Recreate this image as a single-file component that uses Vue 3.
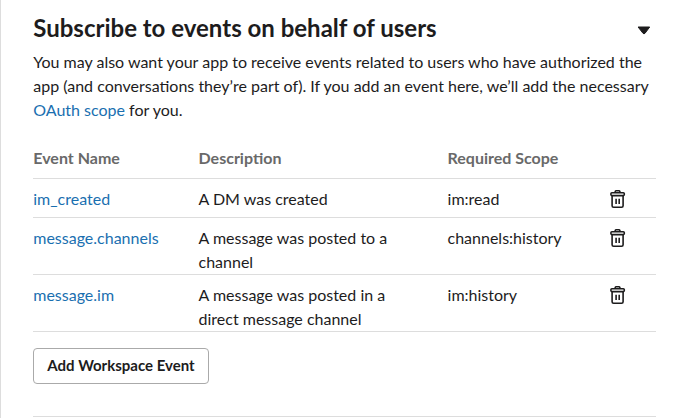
<script setup>
const rows = [
  { name: 'im_created', desc: 'A DM was created', scope: 'im:read' },
  { name: 'message.channels', desc: 'A message was posted to a channel', scope: 'channels:history' },
  { name: 'message.im', desc: 'A message was posted in a direct message channel', scope: 'im:history' }
]
</script>

<template>
  <main class="card">
    <header class="head">
      <h2>Subscribe to events on behalf of users</h2>
      <svg class="caret" width="14" height="9" viewBox="0 0 14 9"><path d="M1.1 1h11.6L8 7.3Q7 8.3 6 7.3z" fill="#1d1c1d" stroke="#1d1c1d" stroke-width="1" stroke-linejoin="round" /></svg>
    </header>
    <p class="intro">
      You may also want your app to receive events related to users who have authorized the<br>
      app (and conversations they’re part of). If you add an event here, we’ll add the necessary<br>
      <a>OAuth scope</a> for you.
    </p>
    <div class="table">
      <div class="row th"><span>Event Name</span><span>Description</span><span>Required Scope</span></div>
      <div v-for="r in rows" :key="r.name" class="row">
        <a>{{ r.name }}</a>
        <span class="desc">{{ r.desc }}</span>
        <span>{{ r.scope }}</span>
        <svg class="trash" width="16" height="18" viewBox="0 0 16 18" fill="none" stroke="#1d1c1d" stroke-width="1.6" stroke-linejoin="round">
          <rect x="0.9" y="2.8" width="13.4" height="2.8" rx="1" />
          <path d="M4.8 2.8L5.4 1.2Q5.6.8 6.1.8H9q.5 0 .7.4l.6 1.6M2.1 5.6v10.1q0 1.5 1.5 1.5h8q1.5 0 1.5-1.5V5.6M6.1 8.8v5.2M9.2 8.8v5.2" />
        </svg>
      </div>
    </div>
    <button class="add">Add Workspace Event</button>
    <hr>
  </main>
</template>

<style>
body { margin: 0; background: #fff; overflow: hidden; }
</style>
<style scoped>
.card { box-sizing: border-box; height: 418px; padding: 12px 32px 0 32.25px; border-left: 1px solid #ddd; font: 16px/24px Lato, sans-serif; color: #1d1c1d; }
.head { display: flex; justify-content: space-between; align-items: center; height: 32px; padding-right: 4.8px; }
.caret { margin-top: 4px; }
h2 { margin: 0; font-size: 24px; line-height: 32px; font-weight: 700; white-space: nowrap; }
.intro { margin: 6px 0 0; white-space: nowrap; }
a { color: #1a6fb0; }
.table { margin-top: 17px; }
.row { display: grid; grid-template-columns: 165.3px 249px 162.4px 1fr; padding: 8px 0 0; min-height: 30px; border-bottom: 1px solid #ddd; }
.row.th { min-height: 0; padding: 7px 0 8px; font-weight: 700; color: #696969; }
.desc { width: 205px; }
.trash { margin-top: 3px; }
.add { display: block; box-sizing: border-box; width: 176px; height: 36px; margin: 16px 0 0; padding: 0 0.5px 2px 0; border: 1px solid #aaa; border-radius: 4px; background: #fff; color: #1d1c1d; font: 700 15px/20px Lato, sans-serif; }
hr { margin: 32px 0 0; border: 0; border-top: 1px solid #ddd; }
</style>
